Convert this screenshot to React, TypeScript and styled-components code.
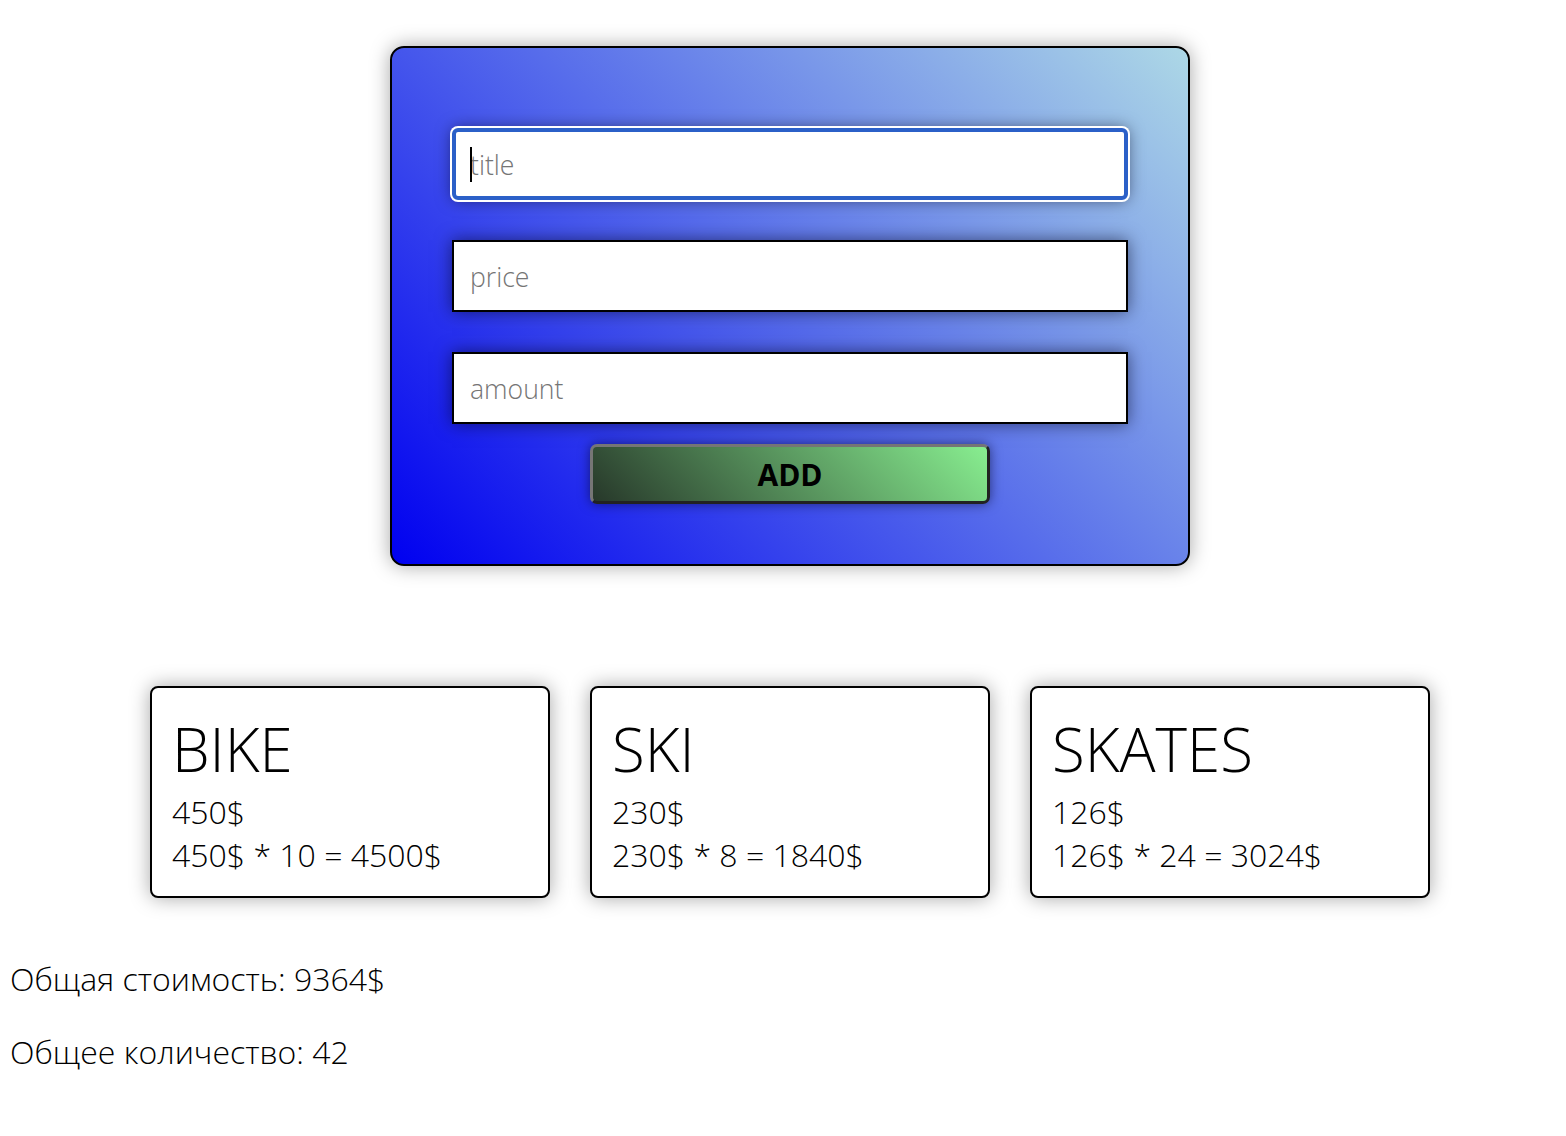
import React from "react";
import styled, { createGlobalStyle } from "styled-components";

const GlobalStyle = createGlobalStyle`
  body {
    margin: 8px;
    font-family: "Open Sans", "Noto Sans", sans-serif;
    font-weight: 300;
    color: #000;
    background: #fff;
  }
  * { box-sizing: border-box; }
`;

const Page = styled.div`
  display: flex;
  flex-direction: column;
  padding-top: 38px;
`;

const Centered = styled.div`
  display: flex;
  justify-content: center;
  padding-left: 14px;
`;

const FormCard = styled.form`
  width: 800px;
  height: 520px;
  padding: 80px 60px 60px;
  border: 2px solid #000;
  border-radius: 14px;
  background: linear-gradient(45deg, #0000f0, #add8e6);
  box-shadow: 0 0 20px rgba(0, 0, 0, 0.35);
  display: flex;
  flex-direction: column;
  align-items: center;
`;

const Field = styled.div<{ $gap: number }>`
  position: relative;
  width: 100%;
  margin-bottom: ${(p) => p.$gap}px;
`;

const Input = styled.input<{ $focused?: boolean }>`
  display: block;
  width: 100%;
  height: 72px;
  padding: 2px 16px 0;
  border: 2px solid #000;
  background: #fff;
  font-family: "Open Sans", sans-serif;
  font-weight: 300;
  font-size: 26.6px;
  color: #000;
  outline: none;
  box-shadow: 0 0 16px rgba(0, 0, 20, 0.55);
  ${(p) =>
    p.$focused &&
    `
    border: 4px solid #2b60c8;
    border-radius: 6px;
    padding: 2px 14px 0;
    box-shadow: 0 0 0 2px #fff, 0 0 16px rgba(0, 0, 20, 0.55);
  `}
  &::placeholder {
    color: #757575;
  }
`;

const Caret = styled.span`
  position: absolute;
  left: 18px;
  top: 19px;
  width: 2px;
  height: 35px;
  background: #000;
`;

const AddButton = styled.button`
  width: 400px;
  height: 60px;
  padding: 2px 0 0;
  border-style: solid;
  border-width: 3px;
  border-color: #767676 #222 #222 #767676;
  border-radius: 7px;
  background: linear-gradient(45deg, #27382a, #88ee90);
  box-shadow: 0 0 12px rgba(0, 0, 30, 0.55);
  font-family: "Open Sans", sans-serif;
  font-weight: 700;
  font-size: 30px;
  line-height: 1;
  color: #000;
  cursor: pointer;
`;

const CardsRow = styled.div`
  display: flex;
  justify-content: center;
  gap: 40px;
  padding-left: 14px;
  margin-top: 120px;
`;

const ProductCard = styled.div`
  width: 400px;
  padding: 20px 20px;
  border: 2px solid #000;
  border-radius: 8px;
  background: #fff;
  box-shadow: 0 0 20px rgba(0, 0, 0, 0.35);
`;

const CardTitle = styled.div`
  font-size: 60px;
  font-weight: 300;
`;

const CardLine = styled.div`
  font-size: 32px;
  font-weight: 300;
`;

const Totals = styled.div`
  display: flex;
  flex-direction: column;
  gap: 30px;
  margin-top: 59px;
  padding-left: 2px;
`;

const TotalLine = styled.p`
  margin: 0;
  font-size: 32px;
  font-weight: 300;
`;

const products = [
  { title: "BIKE", price: 450, amount: 10 },
  { title: "SKI", price: 230, amount: 8 },
  { title: "SKATES", price: 126, amount: 24 },
];

export default function App() {
  const total = products.reduce((s, p) => s + p.price * p.amount, 0);
  const count = products.reduce((s, p) => s + p.amount, 0);
  return (
    <>
      <GlobalStyle />
      <Page>
        <Centered>
          <FormCard onSubmit={(e) => e.preventDefault()}>
            <Field $gap={40}>
              <Input $focused placeholder="title" />
              <Caret />
            </Field>
            <Field $gap={40}>
              <Input placeholder="price" />
            </Field>
            <Field $gap={20}>
              <Input placeholder="amount" />
            </Field>
            <AddButton type="submit">ADD</AddButton>
          </FormCard>
        </Centered>
        <CardsRow>
          {products.map((p) => (
            <ProductCard key={p.title}>
              <CardTitle>{p.title}</CardTitle>
              <CardLine>{p.price}$</CardLine>
              <CardLine>
                {p.price}$ * {p.amount} = {p.price * p.amount}$
              </CardLine>
            </ProductCard>
          ))}
        </CardsRow>
        <Totals>
          <TotalLine>Общая стоимость: {total}$</TotalLine>
          <TotalLine>Общее количество: {count}</TotalLine>
        </Totals>
      </Page>
    </>
  );
}
